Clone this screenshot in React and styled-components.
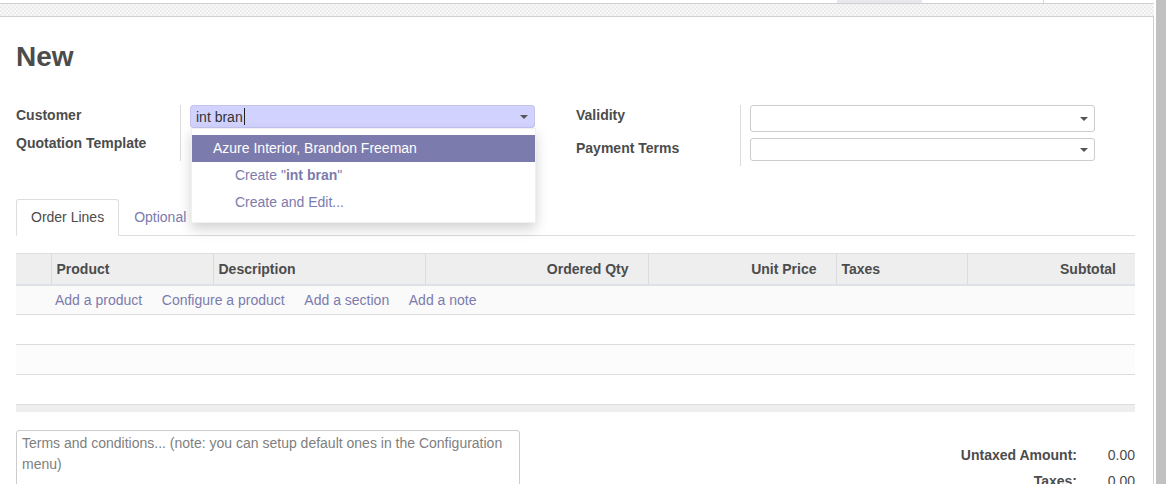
import React from "react";
import styled, { createGlobalStyle } from "styled-components";

const GlobalStyle = createGlobalStyle`
  html, body { margin: 0; padding: 0; background: #fff; overflow: hidden; }
  body {
    font-family: "Liberation Sans", Arial, sans-serif;
    font-size: 14px;
    color: #4c4c4c;
  }
  * { box-sizing: border-box; }
`;

const Page = styled.div`
  display: flex;
  height: 484px;
  overflow: hidden;
`;

const Main = styled.div`
  flex: 1;
  display: flex;
  flex-direction: column;
  min-width: 0;
  min-height: 0;
`;

const Scrollbar = styled.div`
  width: 10px;
  background: #c1c1c1;
  flex-shrink: 0;
`;

const TopStrip = styled.div`
  height: 4px;
  flex-shrink: 0;
  display: flex;
  border-bottom: 1px solid #cfcfcf;
  margin-right: 2px;
`;

const StripGap = styled.div`
  width: ${(p) => p.$w}px;
  flex-shrink: 0;
`;

const StripTab = styled.div`
  width: ${(p) => p.$w}px;
  background: #e8e8ed;
  flex-shrink: 0;
`;

const StripDivider = styled.div`
  width: 1px;
  background: #d6d6d6;
`;

const PatternBand = styled.div`
  height: 13px;
  flex-shrink: 0;
  margin-right: 2px;
  border-bottom: 1px solid #cfcfcf;
  background-color: #f2f2f2;
  background-image: repeating-conic-gradient(#ededed 0 25%, #f7f7f7 0 50%);
  background-size: 4px 4px;
`;

const Sheet = styled.div`
  flex: 1 0 auto;
  background: #fff;
  border-right: 1px solid #cfcfcf;
  margin-right: 2px;
  padding: 23px 18px 0 16px;
`;

const Title = styled.h1`
  margin: 0 0 31px;
  font-size: 28px;
  line-height: 34px;
  font-weight: bold;
  color: #4c4c4c;
`;

const Groups = styled.div`
  display: grid;
  grid-template-columns: 540px 1fr;
  column-gap: 20px;
  align-items: start;
`;

const Group = styled.div`
  display: flex;
  flex-direction: column;
`;

const FieldRow = styled.div`
  display: flex;
  height: ${(p) => p.$h}px;
`;

const LabelCell = styled.div`
  width: 165px;
  flex-shrink: 0;
  border-right: 1px solid #dcdcdc;
  padding-top: ${(p) => p.$pt || 0}px;
  font-weight: bold;
  line-height: 20px;
  color: #4c4c4c;
`;

const FieldCell = styled.div`
  position: relative;
  padding-left: 9px;
  padding-top: ${(p) => p.$pt || 0}px;
`;

const SelectBox = styled.div`
  position: relative;
  width: 345px;
  height: ${(p) => p.$h}px;
  border: 1px solid ${(p) => (p.$active ? "#c4c4ee" : "#cccccc")};
  border-radius: 3px;
  background: ${(p) => (p.$active ? "#d2d2ff" : "#fff")};
  padding-left: 5px;
  display: flex;
  align-items: center;
  color: #333;
  line-height: 20px;
`;

const Caret = styled.span`
  display: inline-block;
  width: 1px;
  height: 17px;
  background: #222;
  margin-left: 1px;
`;

const Arrow = styled.span`
  position: absolute;
  right: 6px;
  top: 50%;
  margin-top: -2px;
  width: 0;
  height: 0;
  border-left: 4px solid transparent;
  border-right: 4px solid transparent;
  border-top: 4px solid #555;
`;

const Dropdown = styled.ul`
  position: absolute;
  z-index: 10;
  top: 23px;
  left: 10px;
  width: 345px;
  margin: 0;
  padding: 6px 0 6px;
  list-style: none;
  background: #fff;
  border: 1px solid rgba(0, 0, 0, 0.06);
  box-shadow: 0 6px 12px rgba(0, 0, 0, 0.175);
`;

const DropItem = styled.li`
  height: 27px;
  line-height: 27px;
  padding-left: ${(p) => (p.$indent ? 43 : 21)}px;
  background: ${(p) => (p.$active ? "#7c7bad" : "transparent")};
  color: ${(p) => (p.$active ? "#fff" : "#7c7bad")};
  white-space: nowrap;
  b { font-weight: bold; }
`;

const Tabs = styled.div`
  display: flex;
  height: 37px;
  margin-top: 33px;
  border-bottom: 1px solid #dddddd;
`;

const Tab = styled.div`
  padding: 0 14px;
  line-height: 35px;
  height: 37px;
  color: ${(p) => (p.$active ? "#4c4c4c" : "#7c7bad")};
  background: ${(p) => (p.$active ? "#fff" : "transparent")};
  border: 1px solid ${(p) => (p.$active ? "#dddddd" : "transparent")};
  border-bottom-color: ${(p) => (p.$active ? "#fff" : "transparent")};
  border-radius: 3px 3px 0 0;
  white-space: nowrap;
`;

const Table = styled.table`
  width: 100%;
  table-layout: fixed;
  border-collapse: collapse;
  margin-top: 17px;
`;

const HeadRow = styled.tr`
  border-top: 1px solid #dddddd;
  background: #eeeeee;
`;

const Th = styled.th`
  height: 31px;
  padding: 0 ${(p) => (p.$right ? "19px" : "5px")} 0 5px;
  text-align: ${(p) => (p.$right ? "right" : "left")};
  font-weight: bold;
  color: #4c4c4c;
  border-bottom: 2px solid #dee2e6;
  border-left: ${(p) => (p.$first ? "none" : "1px solid #dcdcdc")};
  white-space: nowrap;
  overflow: hidden;
`;

const BodyRow = styled.tr`
  background: ${(p) => p.$bg || "#fff"};
  border-bottom: 1px solid #dddddd;
`;

const Td = styled.td`
  height: 30px;
  padding: 0 4px;
`;

const AddLinks = styled.div`
  display: flex;
  gap: 19.6px;
`;

const Link = styled.a`
  color: #7c7bad;
  text-decoration: none;
  cursor: pointer;
  white-space: nowrap;
`;

const FootRow = styled.tr`
  background: #eeeeee;
  border-top: 1px solid #dddddd;
`;

const FootTd = styled.td`
  height: 7px;
  padding: 0;
`;

const Bottom = styled.div`
  display: flex;
  justify-content: space-between;
  align-items: flex-start;
  margin-top: 18px;
`;

const Terms = styled.div`
  width: 504px;
  height: 62px;
  border: 1px solid #cccccc;
  border-radius: 3px;
  padding: 2px 5px;
  line-height: 21px;
  color: #808080;
`;

const Totals = styled.div`
  margin-top: 15px;
  display: grid;
  grid-template-columns: auto 58px;
  row-gap: 6px;
  line-height: 20px;
`;

const TotalLabel = styled.div`
  font-weight: bold;
  text-align: right;
  color: #4c4c4c;
`;

const TotalValue = styled.div`
  text-align: right;
  color: #4c4c4c;
`;

export default function App() {
  return (
    <>
      <GlobalStyle />
      <Page>
        <Main>
          <TopStrip>
            <StripGap $w={837} />
            <StripTab $w={85} />
            <StripGap $w={121} />
            <StripDivider />
          </TopStrip>
          <PatternBand />
          <Sheet>
            <Title>New</Title>
            <Groups>
              <Group>
                <FieldRow $h={26}>
                  <LabelCell>Customer</LabelCell>
                  <FieldCell>
                    <SelectBox $h={23} $active>
                      int bran<Caret />
                      <Arrow />
                    </SelectBox>
                    <Dropdown>
                      <DropItem $active>Azure Interior, Brandon Freeman</DropItem>
                      <DropItem $indent>
                        Create "<b>int bran</b>"
                      </DropItem>
                      <DropItem $indent>Create and Edit...</DropItem>
                    </Dropdown>
                  </FieldCell>
                </FieldRow>
                <FieldRow $h={30}>
                  <LabelCell $pt={2}>Quotation Template</LabelCell>
                  <FieldCell $pt={2} />
                </FieldRow>
              </Group>
              <Group>
                <FieldRow $h={31}>
                  <LabelCell>Validity</LabelCell>
                  <FieldCell>
                    <SelectBox $h={27}>
                      <Arrow />
                    </SelectBox>
                  </FieldCell>
                </FieldRow>
                <FieldRow $h={30}>
                  <LabelCell $pt={2}>Payment Terms</LabelCell>
                  <FieldCell $pt={2}>
                    <SelectBox $h={23}>
                      <Arrow />
                    </SelectBox>
                  </FieldCell>
                </FieldRow>
              </Group>
            </Groups>

            <Tabs>
              <Tab $active>Order Lines</Tab>
              <Tab>Optional Products</Tab>
            </Tabs>

            <Table>
              <colgroup>
                <col style={{ width: 35 }} />
                <col style={{ width: 162 }} />
                <col style={{ width: 212 }} />
                <col style={{ width: 223 }} />
                <col style={{ width: 188 }} />
                <col style={{ width: 131 }} />
                <col />
              </colgroup>
              <thead>
                <HeadRow>
                  <Th $first />
                  <Th>Product</Th>
                  <Th>Description</Th>
                  <Th $right>Ordered Qty</Th>
                  <Th $right>Unit Price</Th>
                  <Th>Taxes</Th>
                  <Th $right>Subtotal</Th>
                </HeadRow>
              </thead>
              <tbody>
                <BodyRow $bg="#fafafa">
                  <Td />
                  <Td colSpan={6}>
                    <AddLinks>
                      <Link>Add a product</Link>
                      <Link>Configure a product</Link>
                      <Link>Add a section</Link>
                      <Link>Add a note</Link>
                    </AddLinks>
                  </Td>
                </BodyRow>
                <BodyRow>
                  <Td colSpan={7} />
                </BodyRow>
                <BodyRow $bg="#fcfcfc">
                  <Td colSpan={7} />
                </BodyRow>
                <BodyRow>
                  <Td colSpan={7} />
                </BodyRow>
              </tbody>
              <tfoot>
                <FootRow>
                  <FootTd colSpan={7} />
                </FootRow>
              </tfoot>
            </Table>

            <Bottom>
              <Terms>
                Terms and conditions... (note: you can setup default ones in the Configuration menu)
              </Terms>
              <Totals>
                <TotalLabel>Untaxed Amount:</TotalLabel>
                <TotalValue>0.00</TotalValue>
                <TotalLabel>Taxes:</TotalLabel>
                <TotalValue>0.00</TotalValue>
              </Totals>
            </Bottom>
          </Sheet>
        </Main>
        <Scrollbar />
      </Page>
    </>
  );
}
